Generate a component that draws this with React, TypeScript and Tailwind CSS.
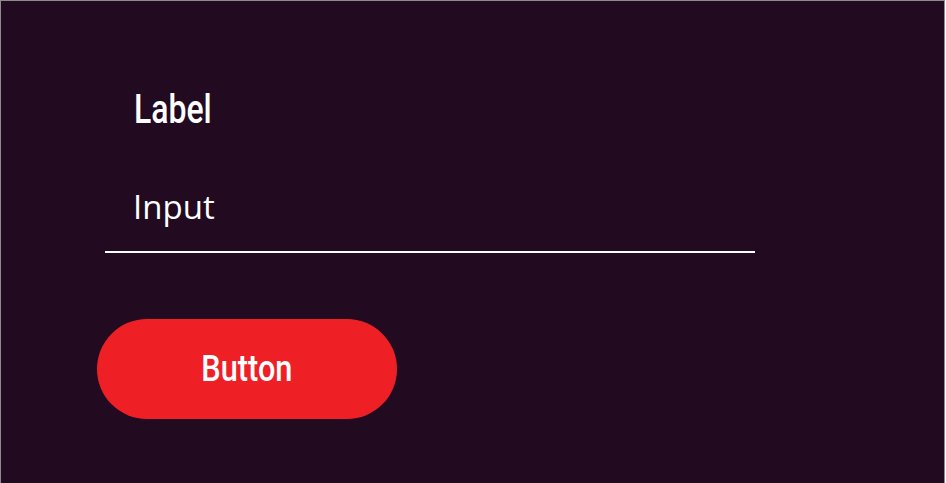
export default function App() {
  return (
    <div className="w-[945px] h-[490px] bg-[#220a21] border-t border-l border-r border-[#8e8a8e] overflow-hidden">
      <div className="pt-[86px] pl-[96px]">
        <div className="ml-[37px] h-[44px]">
          <span
            className="inline-block origin-left scale-x-[0.78] text-white text-[41px] leading-[44px] font-medium"
            style={{ fontFamily: "Roboto, sans-serif" }}
          >
            Label
          </span>
        </div>
        <div className="mt-[58px] ml-[8px] w-[650px] border-b-2 border-white pb-[26px] pl-[28px]">
          <div
            className="text-white text-[33px] leading-[36px]"
            style={{ fontFamily: "'Open Sans', sans-serif" }}
          >
            Input
          </div>
        </div>
        <button className="mt-[66px] w-[300px] h-[100px] rounded-full bg-[#ee2026] text-white flex items-center justify-center">
          <span
            className="inline-block scale-x-[0.83] text-[37px] leading-[40px] font-medium"
            style={{ fontFamily: "Roboto, sans-serif" }}
          >
            Button
          </span>
        </button>
      </div>
    </div>
  );
}
